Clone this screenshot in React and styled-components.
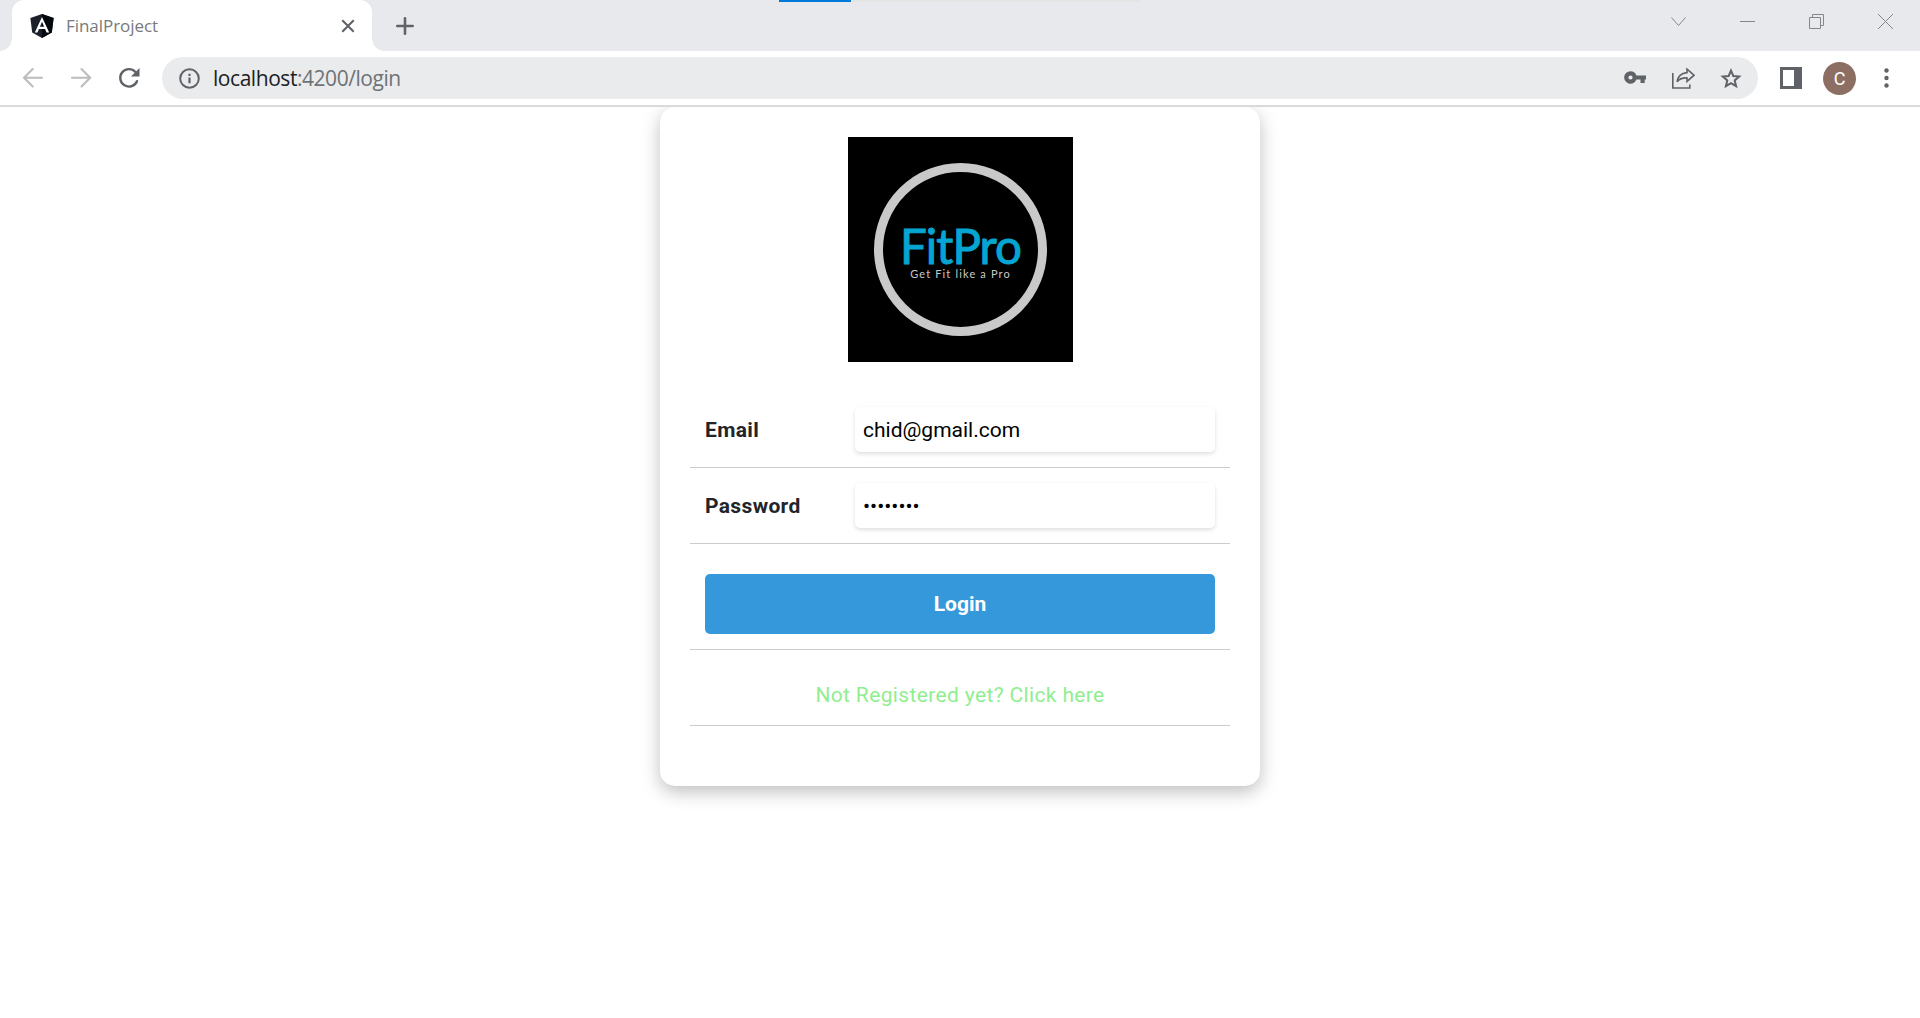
import React from "react";
import styled, { createGlobalStyle, css } from "styled-components";

const GlobalStyle = createGlobalStyle`
  * { box-sizing: border-box; }
  html, body { margin: 0; padding: 0; background: #fff; overflow: hidden; }
  svg { display: block; flex: none; }
`;

const Window = styled.div`
  display: flex;
  flex-direction: column;
  width: 1920px;
  height: 1018px;
  background: #fff;
  font-family: Roboto, sans-serif;
`;

const TabStrip = styled.header`
  position: relative;
  display: flex;
  justify-content: space-between;
  height: 51px;
  padding-left: 12px;
  background: #e8e9ed;
`;

const LoadingTrack = styled.div`
  position: absolute;
  top: 0;
  left: 779px;
  width: 362px;
  height: 2px;
  background: #e4e5e5;
`;

const LoadingBar = styled.div`
  width: 72px;
  height: 2px;
  background: #0078d7;
`;

const TabGroup = styled.div`
  display: flex;
  align-items: center;
`;

const Tab = styled.div`
  position: relative;
  display: flex;
  align-items: center;
  width: 360px;
  height: 51px;
  padding: 0 17px 0 18px;
  background: #fff;
  border-radius: 12px 12px 0 0;

  &::before,
  &::after {
    content: "";
    position: absolute;
    bottom: 0;
    width: 12px;
    height: 12px;
  }
  &::before {
    left: -12px;
    background: radial-gradient(circle at 0 0, transparent 11.5px, #fff 12px);
  }
  &::after {
    right: -12px;
    background: radial-gradient(circle at 100% 0, transparent 11.5px, #fff 12px);
  }
`;

const TabTitle = styled.span`
  flex: 1;
  margin-left: 12px;
  font: 400 17px/22px "Open Sans", sans-serif;
  letter-spacing: -0.05px;
  color: #77797c;
`;

const NewTab = styled.div`
  margin-left: 24px;
`;

const WindowControls = styled.div`
  display: flex;
  gap: 53px;
  padding: 14px 26px 0 0;
  height: 31px;
`;

const Toolbar = styled.nav`
  display: flex;
  align-items: center;
  height: 56px;
  padding: 0 31px 0 21px;
  background: #fff;
  border-bottom: 2px solid #dadada;
`;

const NavButtons = styled.div`
  display: flex;
  align-items: center;
  gap: 24px;
  width: 141px;
`;

const AddressBar = styled.div`
  display: flex;
  align-items: center;
  width: 1596px;
  height: 42px;
  padding: 0 16px 0 17px;
  border-radius: 21px;
  background: #e9ebec;
`;

const Url = styled.span`
  flex: 1;
  margin-left: 13px;
  font: 400 21px/28px "Open Sans", sans-serif;
  letter-spacing: -0.45px;
  color: #6f7276;
`;

const Host = styled.span`
  color: #202124;
`;

const AddressActions = styled.div`
  display: flex;
  align-items: center;
  gap: 25px;
`;

const ToolbarActions = styled.div`
  display: flex;
  align-items: center;
  flex: 1;
  padding-left: 22px;
`;

const Avatar = styled.div`
  display: flex;
  align-items: center;
  justify-content: center;
  width: 33px;
  height: 33px;
  margin: 0 28px 0 21px;
  border-radius: 50%;
  background: #8d6e63;
  color: #fff;
  font-size: 18px;
`;

const Page = styled.main`
  flex: 1;
  display: flex;
  justify-content: center;
  align-items: flex-start;
  overflow: hidden;
`;

const Card = styled.form`
  display: flex;
  flex-direction: column;
  align-items: center;
  width: 600px;
  height: 679px;
  padding: 30px;
  border-radius: 15px;
  background: #fff;
  box-shadow: 0 6px 18px rgba(0, 0, 0, 0.25);
`;

const Logo = styled.div`
  display: flex;
  align-items: center;
  justify-content: center;
  width: 225px;
  height: 225px;
  margin: 0 0 30px 1px;
  background: #000;
`;

const LogoRing = styled.div`
  display: flex;
  flex-direction: column;
  align-items: center;
  width: 173px;
  height: 173px;
  margin-top: -1px;
  padding-top: 54px;
  border: 9px solid #c9c9c9;
  border-radius: 50%;
`;

const LogoName = styled.div`
  font: 400 47.5px/40px Lato, sans-serif;
  letter-spacing: -0.9px;
  -webkit-text-stroke: 1px #05a5d3;
  white-space: nowrap;
  color: #05a5d3;
`;

const LogoTagline = styled.div`
  margin-top: 1px;
  font: 400 11px/14px Lato, sans-serif;
  letter-spacing: 1.15px;
  white-space: nowrap;
  color: #c9c9c9;
`;

const Row = styled.div`
  display: flex;
  align-items: center;
  width: 540px;
  height: ${(p) => p.$height || 76}px;
  padding: ${(p) => p.$top || 15}px 15px 15px;
  border-bottom: 1px solid #ccc;
  ${(p) => p.$center && css`justify-content: center;`}
`;

const Label = styled.label`
  width: 150px;
  font-size: 21px;
  font-weight: 700;
  line-height: 30px;
  letter-spacing: 0.35px;
  color: #212529;
`;

const Input = styled.input`
  width: 360px;
  height: 45px;
  padding: 0 8px;
  border: 0;
  border-radius: 5px;
  outline: 0;
  background: #fff;
  box-shadow: 0 2px 4px rgba(0, 0, 0, 0.13);
  font: 400 21px Roboto, sans-serif;
  color: #000;
`;

const LoginButton = styled.button`
  width: 510px;
  height: 60px;
  border: 0;
  border-radius: 5px;
  background: #3498db;
  color: #fff;
  font: 700 21px Roboto, sans-serif;
`;

const RegisterLink = styled.a`
  font-size: 21px;
  line-height: 30px;
  letter-spacing: 0.36px;
  color: #90ee90;
`;

const AngularIcon = () => (
  <svg width="24" height="24" viewBox="0 0 25 25">
    <path d="M12.5 0 24.6 4.1 22.7 19.4 12.5 25 2.3 19.4.4 4.1Z" fill="#1b202b" />
    <path d="M12.5 0 24.6 4.1 22.7 19.4 12.5 25Z" fill="#05080f" />
    <path fillRule="evenodd" d="M12.5 3 5 19.2h2.8l1.5-3.7h6.4l1.5 3.7H20L12.5 3Zm0 5.1 2.2 5.1h-4.4l2.2-5.1Z" fill="#fff" />
  </svg>
);

const TabClose = () => (
  <svg width="14" height="14" viewBox="0 0 14 14" stroke="#5f6368" strokeWidth="2.1">
    <path d="M1.3 1.3l11.4 11.4M12.7 1.3L1.3 12.7" />
  </svg>
);

const Plus = () => (
  <svg width="18" height="18" viewBox="0 0 18 18" stroke="#5f6368" strokeWidth="2.6" strokeLinecap="round">
    <path d="M9 1.3v15.4M1.3 9h15.4" />
  </svg>
);

const Chevron = () => (
  <svg width="16" height="16" viewBox="0 0 16 16" fill="none" stroke="#85868a">
    <path d="M.5 3.5l7 8 7-8" />
  </svg>
);

const Minimize = () => (
  <svg width="16" height="16" viewBox="0 0 16 16" stroke="#85868a">
    <path d="M0 7.5h15" />
  </svg>
);

const Restore = () => (
  <svg width="16" height="16" viewBox="0 0 16 16" fill="none" stroke="#85868a">
    <path d="M.5 3.5h11v11H.5zM3.5 3V.5h11v11H12" />
  </svg>
);

const WindowClose = () => (
  <svg width="16" height="16" viewBox="0 0 16 16" stroke="#85868a">
    <path d="M0 0l15 15M15 0L0 15" />
  </svg>
);

const Arrow = ({ forward }) => (
  <svg width="24" height="22" viewBox="0 0 24 22" fill="none" stroke="#babcbe" strokeWidth="2.1" strokeLinecap="round">
    <path d={forward ? "M3 10.7h18M12.5 2l8.700 8.700-8.700 8.700" : "M21 10.7H3M11.7 2 3 10.7l8.700 8.700"} />
  </svg>
);

const Reload = () => (
  <svg width="24" height="24" viewBox="0 0 24 24">
    <path d="M20 15.2A8.7 8.7 0 1 1 18.4 6" fill="none" stroke="#5f6368" strokeWidth="2.4" strokeLinecap="round" />
    <path d="M22.5 2v8.5H14Z" fill="#5f6368" />
  </svg>
);

const Info = () => (
  <svg width="21" height="21" viewBox="0 0 21 21">
    <circle cx="10.5" cy="10.5" r="9.3" fill="none" stroke="#5f6368" strokeWidth="2" />
    <path d="M9.4 9.5h2.2v5.8H9.4zM9.4 5.7h2.2v2.2H9.4z" fill="#5f6368" />
  </svg>
);

const Key = () => (
  <svg width="22" height="15" viewBox="0 0 22 15">
    <path
      fillRule="evenodd"
      d="M6.5.2a6.3 6.3 0 1 0 5.9 8.4h4.1V12h4.2V8.6H22V4.4h-9.6A6.3 6.3 0 0 0 6.5.2Zm0 4.200a2.100 2.100 0 1 1 0 4.200 2.100 2.100 0 0 1 0-4.200Z"
      fill="#5f6368"
    />
  </svg>
);

const Share = () => (
  <svg width="24" height="22" viewBox="0 0 24 22" fill="none" stroke="#5f6368" strokeWidth="1.6">
    <path d="M1.8 6v15h17v-3.5" />
    <path d="M16 2.2 23 8.2l-7 6.2v-3.500c-4.400-.2-7.500.6-9.900 4 .7-5.700 4-8.700 9.900-9.300Z" />
  </svg>
);

const Star = () => (
  <svg width="22" height="21" viewBox="0 0 22 21" fill="none" stroke="#5f6368" strokeWidth="2">
    <path d="M11 2.6 13.3 8 19.2 8.5 14.7 12.4 16.1 18.2 11 15.1 5.9 18.2 7.3 12.4 2.8 8.5 8.7 8Z" />
  </svg>
);

const SidePanel = () => (
  <svg width="22" height="22" viewBox="0 0 22 22">
    <path fillRule="evenodd" d="M0 0h22v22H0zM3 3v16h11V3z" fill="#5f6368" />
  </svg>
);

const Dots = () => (
  <svg width="5" height="20" viewBox="0 0 5 20" fill="#5f6368">
    <circle cx="2.5" cy="2.5" r="2.2" />
    <circle cx="2.5" cy="10" r="2.2" />
    <circle cx="2.5" cy="17.5" r="2.2" />
  </svg>
);

export default function App() {
  return (
    <Window>
      <GlobalStyle />
      <TabStrip>
        <LoadingTrack>
          <LoadingBar />
        </LoadingTrack>
        <TabGroup>
          <Tab>
            <AngularIcon />
            <TabTitle>FinalProject</TabTitle>
            <TabClose />
          </Tab>
          <NewTab>
            <Plus />
          </NewTab>
        </TabGroup>
        <WindowControls>
          <Chevron />
          <Minimize />
          <Restore />
          <WindowClose />
        </WindowControls>
      </TabStrip>
      <Toolbar>
        <NavButtons>
          <Arrow />
          <Arrow forward />
          <Reload />
        </NavButtons>
        <AddressBar>
          <Info />
          <Url>
            <Host>localhost</Host>:4200/login
          </Url>
          <AddressActions>
            <Key />
            <Share />
            <Star />
          </AddressActions>
        </AddressBar>
        <ToolbarActions>
          <SidePanel />
          <Avatar>C</Avatar>
          <Dots />
        </ToolbarActions>
      </Toolbar>
      <Page>
        <Card>
          <Logo>
            <LogoRing>
              <LogoName>FitPro</LogoName>
              <LogoTagline>Get Fit like a Pro</LogoTagline>
            </LogoRing>
          </Logo>
          <Row>
            <Label htmlFor="email">Email</Label>
            <Input id="email" type="text" defaultValue="chid@gmail.com" />
          </Row>
          <Row>
            <Label htmlFor="password">Password</Label>
            <Input id="password" type="password" defaultValue="fitpro12" />
          </Row>
          <Row $height={106} $top={30}>
            <LoginButton type="button">Login</LoginButton>
          </Row>
          <Row $top={30} $center>
            <RegisterLink>Not Registered yet? Click here</RegisterLink>
          </Row>
        </Card>
      </Page>
    </Window>
  );
}
